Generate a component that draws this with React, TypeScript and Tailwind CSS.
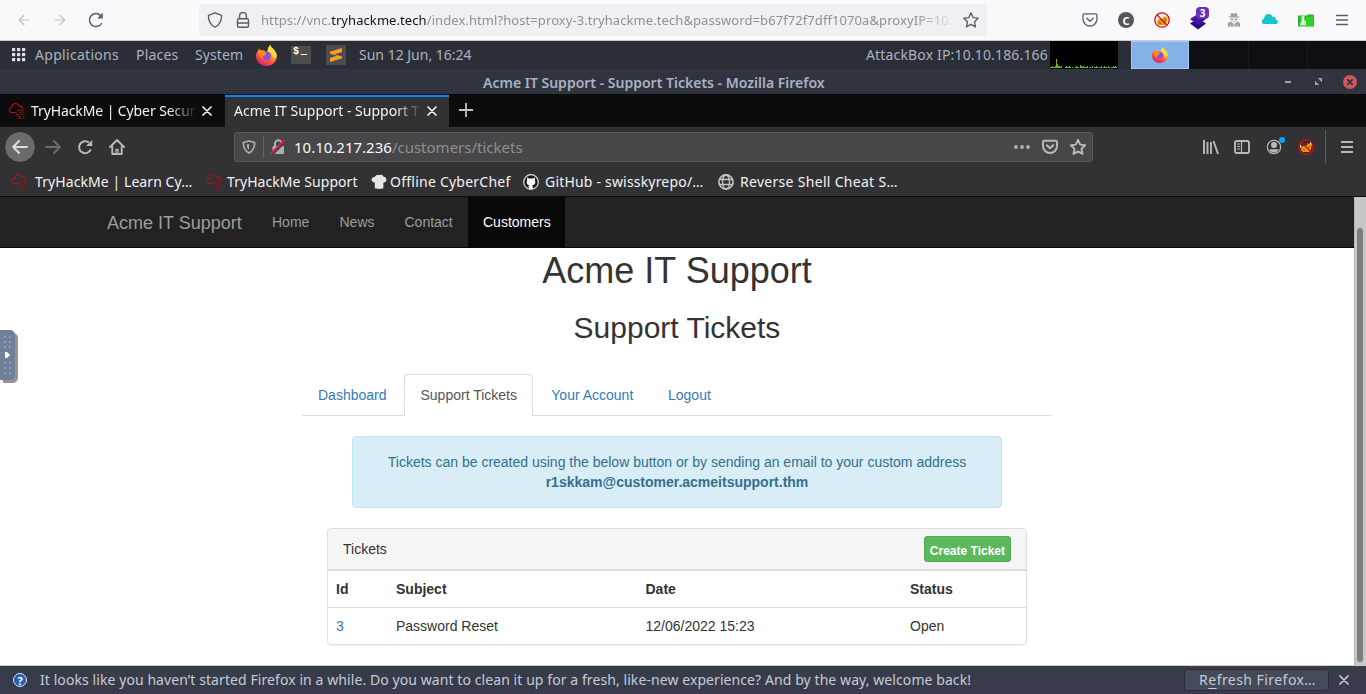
import React from "react";
import { ArrowLeft, ArrowRight } from "lucide-react";

function Firefox({ className }: { className: string }) {
  return (
    <svg viewBox="0 0 20 20" className={className}>
      <defs>
        <linearGradient id="fx" x1="0.85" y1="0.05" x2="0.3" y2="1">
          <stop offset="0" stopColor="#fff44f" />
          <stop offset="0.35" stopColor="#ffa42e" />
          <stop offset="0.65" stopColor="#ff5a36" />
          <stop offset="1" stopColor="#e31587" />
        </linearGradient>
      </defs>
      <path d="M2.2 5.2 2.6 3.4 4.6 5.1 6.8 4.9C8 4.9 9 6 9.6 6.6L11 6.2C11 3 12.5 1 13.6 0c.4 2.400 3 3.400 4.300 5.600C19.300 7 20 9 19.900 11 19.600 16 15.400 20 10.200 20 4.600 20 0 16 0 10.500 0 8.500.6 6.800 2.200 5.200Z" fill="url(#fx)" />
      <path d="M11 6.200C11 3 12.500 1 13.600 0c.4 2.400 3 3.400 4.300 5.600C19.300 7.500 19.600 9 19.300 11L16.500 13C16 9 14.500 7.500 11 6.200Z" fill="#ffdc3e" />
      <path d="M6 7.800C8 6 12 5.500 13.600 8c1.500 2.600.2 6.200-3.300 6.400-2.800.1-4.600-1.800-4.300-3.600l3.200-.9Z" fill="#8055d8" />
      <path d="M2.500 6.200C5 5 6.500 5.200 8.900 7.200l1 1.400-2.700 1.500c-1.400.8-.8 2.400.8 3-2.800.4-5.500-2-5.500-6.900Z" fill="#ff8a1f" />
    </svg>
  );
}

function RedCloud() {
  return (
    <svg viewBox="0 0 18 18" className="h-[18px] w-[18px] shrink-0" fill="none">
      <path d="M4 10.500C1.500 10.500 1 8.500 1.200 7.600 1.500 6 2.700 5.500 3.800 5.400 4 3 5.500 1.500 7.500 1.500c1.800 0 2.900 1 3.400 2.400 2-.2 3.500.8 3.800 3M4 10.500h4.500" stroke="#b01217" strokeWidth="1.100" />
      <path d="M9.500 8.500h2M12.500 8.500h3M8 12.500h3M12.500 12.500h2M10.500 16h2.500M15 14.500h1.500" stroke="#8f1216" strokeWidth="1.300" />
      <path d="M11.500 10.500h1.500M14.500 10.500h2M9.500 14.500h3M14 16.500h2" stroke="#5e181b" strokeWidth="1.200" />
    </svg>
  );
}

function Close({ className }: { className: string }) {
  return (
    <svg viewBox="0 0 10 10" className={className} stroke="currentColor" strokeWidth="1.700" strokeLinecap="round">
      <path d="M1 1 9 9M9 1 1 9" />
    </svg>
  );
}

function Reload({ className }: { className: string }) {
  return (
    <svg viewBox="0 0 16 16" className={className} fill="none" stroke="currentColor" strokeWidth="1.500">
      <path d="M13.800 11A6.500 6.500 0 1 1 12.500 3.400" />
      <path d="M14.800.8v5.700H9.200Z" fill="currentColor" stroke="none" />
    </svg>
  );
}

function Pocket({ className, weight }: { className: string; weight: number }) {
  return (
    <svg viewBox="0 0 16 16" className={className} fill="none" stroke="currentColor" strokeWidth={weight} strokeLinecap="round" strokeLinejoin="round">
      <path d="M2.300 1.800h11.400a1.300 1.300 0 0 1 1.300 1.300V7A7 7 0 0 1 1 7V3.100a1.300 1.300 0 0 1 1.300-1.300Z" />
      <path d="m4.800 6.300 3.200 3 3.200-3" />
    </svg>
  );
}

function Star({ className, weight }: { className: string; weight: number }) {
  return (
    <svg viewBox="0 0 16 16" className={className} fill="none" stroke="currentColor" strokeWidth={weight} strokeLinejoin="round">
      <path d="m8 .9 2.200 4.700 5 .6-3.700 3.500 1 5.200L8 12.400l-4.500 2.500 1-5.200L.8 6.200l5-.6Z" />
    </svg>
  );
}

function NoFox({ ground }: { ground: string }) {
  return (
    <svg viewBox="0 0 16 16" className="h-4 w-4 shrink-0">
      <circle cx="8" cy="8" r="7" fill={ground} />
      <path d="M3.500 8 5.500 7 9 6.500 9.500 4 11 5l1.500-1L13.500 6.500 13 10l-2 3H4.500L3 11Z" fill="#f0900f" />
      <path d="m12.500 2.500 1.500 2-.5 2-1.500-2ZM1.800 5l2 2.500-1.300 2Z" fill="#f3e3cf" />
      <path d="m5 10.500 2 1M10 8.500l2-.5" stroke="#70421a" strokeWidth=".8" />
      <circle cx="8" cy="8" r="7.200" fill="none" stroke="#cd1010" strokeWidth="1.300" />
      <path d="m3 3 10 10" stroke="#cd1010" strokeWidth="1.300" />
    </svg>
  );
}

function OuterToolbar() {
  return (
    <div className="flex h-[41px] shrink-0 items-center border-b border-[#cccccf] bg-[#f9f9fb] text-[#5b5b66]">
      <div className="flex w-[199px] items-center pl-4 text-[#bdbdc1]">
        <ArrowLeft className="h-4 w-4" strokeWidth={1.8} />
        <ArrowRight className="ml-5 h-4 w-4" strokeWidth={1.8} />
        <Reload className="ml-5 h-4 w-4 text-[#5b5b66]" />
      </div>
      <div className="flex h-8 w-[788px] items-center rounded bg-[#f0f0f4] pl-2">
        <svg viewBox="0 0 16 16" className="h-4 w-4" fill="none" stroke="currentColor" strokeWidth="1.300" strokeLinejoin="round">
          <path d="M8 .8 14.600 3.300C14.700 8.500 13 12.500 8 15.300 3 12.500 1.300 8.500 1.400 3.300Z" />
        </svg>
        <svg viewBox="0 0 16 16" className="ml-3 h-4 w-4" fill="none" stroke="currentColor" strokeWidth="1.400">
          <rect x="2.500" y="6.800" width="11" height="8.400" rx="1.500" />
          <path d="M4.600 6.800V4a3.400 3.400 0 0 1 6.800 0v2.800M2.500 11h11" />
        </svg>
        <div className="ml-[10px] w-[696px] overflow-hidden whitespace-nowrap pt-[2px] font-['Noto_Sans'] text-[13px] tracking-[0.08px] text-[#8f8f98] [mask-image:linear-gradient(to_right,black_94%,transparent)]">
          https://vnc.<span className="text-[#15141a]">tryhackme.tech</span>/index.html?host=proxy-3.tryhackme.tech&amp;password=b67f72f7dff1070a&amp;proxyIP=10.
        </div>
        <Star className="ml-[6px] h-4 w-4" weight={1.3} />
      </div>
      <div className="ml-[85px] grid grid-cols-[repeat(8,36px)] items-center justify-items-center">
        <Pocket className="h-4 w-4" weight={1.3} />
        <span className="flex h-4 w-4 items-center justify-center rounded-full bg-[#55555e] font-['Noto_Sans'] text-[11px] font-bold leading-none text-white">C</span>
        <NoFox ground="#fdf6ec" />
        <div className="relative h-5 w-[18px]">
          <svg viewBox="0 0 18 18" className="mt-[2px] h-[18px] w-[18px]">
            <path d="m1 11.500 8-5 8 5-8 6Z" fill="#2a0a7c" />
            <path d="m1 7 8-5 8 5-8 6Z" fill="#4413a8" />
          </svg>
          <span className="absolute -top-[3px] left-[7px] flex h-[12px] w-[13px] items-center justify-center rounded-sm bg-[#6534b4] font-['Noto_Sans'] text-[10px] font-bold leading-none text-white">3</span>
        </div>
        <svg viewBox="0 0 16 16" className="h-[14px] w-[14px]" fill="#a1a1a3">
          <path d="M4.500 0h2l1 .8h1L9.500 0h2l.3 4H14v1.200H2V4h2.200ZM4 6.200h3.300v1.600L6 8.500H4.500ZM8.700 6.200H12L11.500 8.500H10l-1.300-.7ZM6.500 9h3L8 10.500ZM1 11.500 4.500 9.700 7.500 12.300V15.800H4.500V14H3.500v1.800H1ZM15 11.500 11.500 9.700 8.500 12.300V15.800h3V14h1v1.800H15Z" />
        </svg>
        <svg viewBox="0 0 16 12" className="-mt-[2px] h-3 w-4" fill="#18c3cc">
          <path d="M2.500 11A2.500 2.500 0 0 1 2 6C2 3 4 1 6.500 1c2 0 3.300 1 4 2.800C13 3.500 14 5 14 6.800c1.500.2 2 1.400 2 2.200 0 1.200-.8 2-2 2Z" />
        </svg>
        <svg viewBox="0 0 16 13" className="mt-px h-[13px] w-4">
          <path d="M0 1.500h9L10 .5h5.500L16 2v10.500H0Z" fill="#25b928" />
          <path d="M8 2.500h7.500V12H8Z" fill="#2fcf2c" />
          <path d="M3.500 2h3v4L8 7v4.500H2V9.500L3.500 7Z" fill="#b9edb9" />
          <path d="M4.500 3.500h1V7l1 2.500h-3l1-2.500Z" fill="#f5fff5" />
        </svg>
        <svg viewBox="0 0 12 12" className="h-3 w-3" stroke="currentColor" strokeWidth="1.300"><path d="M0 1.500h12M0 6h12M0 10.500h12" /></svg>
      </div>
    </div>
  );
}

const netBars = [1, 1, 2, 1, 1, 2, 9, 4, 2, 2, 1, 2, 0, 0, 0, 1, 2, 1, 1, 2, 1, 0, 1, 0, 0, 1, 2, 1, 1, 0, 3, 2, 1, 2, 1, 1, 1, 2, 0, 1, 1, 0, 2, 0, 1, 1, 2, 1, 0, 1, 1, 2, 0, 1, 2, 1, 1, 0, 2, 1, 0, 1, 1, 2, 1, 2, 1];

function DesktopPanel() {
  return (
    <div className="flex h-7 shrink-0 items-center whitespace-nowrap bg-[#2b2e37] font-['Noto_Sans'] text-[14px] text-[#a9b2c0]">
      <svg viewBox="0 0 14 14" className="ml-3 h-[14px] w-[14px]" fill="#dcdfe4">
        {[0, 5, 10].map((y) => [0, 5, 10].map((x) => <rect key={`${x}-${y}`} x={x} y={y} width="3.200" height="3.200" />))}
      </svg>
      <span className="-mt-[2px] ml-[9px] w-[101px] tracking-[0.3px]">Applications</span>
      <span className="-mt-[2px] w-[59px] tracking-[0.2px]">Places</span>
      <span className="-mt-[2px] w-[61px] tracking-[0.1px]">System</span>
      <Firefox className="h-[21px] w-[21px]" />
      <span className="ml-[14px] flex h-[18px] w-5 items-start bg-[#4d4d4d] pl-[2px] font-['Liberation_Mono'] text-[10px] font-bold leading-[11px] text-white">
        $<span className="ml-[2px] mt-2 h-px w-[6px] bg-white" />
      </span>
      <span className="ml-[15px] flex h-5 w-5 items-center justify-center bg-[#4d4d4d]">
        <svg viewBox="0 0 12 14" className="h-[14px] w-3" fill="#ff9d24">
          <path d="M0 3.800 12 0v4L4.500 6.300 12 8.500V10.300L0 14V10l7-2.200L0 5.800Z" />
        </svg>
      </span>
      <span className="-mt-[2px] ml-[13px] w-[507px]">Sun 12 Jun, 16:24</span>
      <span className="-mt-[2px] w-[184px] tracking-[0.16px]">AttackBox IP:10.10.186.166</span>
      <svg viewBox="0 0 68 28" className="h-7 w-[68px] bg-black" fill="#66b814">
        {netBars.map((h, i) => <rect key={i} x={i} y={27 - h} width="1" height={h} />)}
      </svg>
      <span className="ml-[13px] flex h-7 w-[58px] items-center justify-center border border-[#a5c9f4] bg-[#85b1e9]">
        <Firefox className="h-4 w-4" />
      </span>
      <span className="h-7 w-[60px] border-r border-[#191b20] bg-[#0e0f12]" />
      <span className="h-7 w-[59px] border-r border-[#191b20] bg-[#0e0f12]" />
      <span className="h-7 flex-1 bg-[#0e0f12]" />
    </div>
  );
}

function TitleBar() {
  return (
    <div className="flex h-[25px] shrink-0 items-center bg-[#2f343f] font-['Noto_Sans'] text-[#a9b2c0]">
      <span className="ml-[483px] w-[802px] whitespace-nowrap pt-px text-[14px] font-semibold">Acme IT Support - Support Tickets - Mozilla Firefox</span>
      <span className="h-[2px] w-[6px] bg-[#9aa2ae]" />
      <svg viewBox="0 0 8 8" className="ml-6 h-[7px] w-[7px]" fill="#9aa2ae"><path d="M3 0h5v5ZM0 3v5h5Z" /></svg>
      <span className="ml-[21px] flex h-[14px] w-[14px] items-center justify-center rounded-full bg-[#cc575d] text-[#2f343f]">
        <svg viewBox="0 0 6 6" className="h-[6px] w-[6px]" stroke="currentColor" strokeWidth="1.800"><path d="m0 0 6 6M6 0 0 6" /></svg>
      </span>
    </div>
  );
}

function TabStrip() {
  return (
    <div className="flex h-[33px] shrink-0 items-stretch bg-[#0c0c0d] font-['Noto_Sans'] text-[14px] text-[#f3f3f4]">
      <div className="flex w-[225px] items-center pl-2">
        <RedCloud />
        <span className="ml-[5px] w-[167px] overflow-hidden whitespace-nowrap tracking-[-0.1px] [mask-image:linear-gradient(to_right,black_82%,transparent)]">TryHackMe | Cyber Secur</span>
        <Close className="ml-1 h-[10px] w-[10px]" />
      </div>
      <div className="mt-px flex w-[224px] items-center border-t-2 border-[#0a84ff] bg-[#323234] pb-[3px] pl-[9px]">
        <span className="w-[188px] overflow-hidden whitespace-nowrap [mask-image:linear-gradient(to_right,black_86%,transparent)]">Acme IT Support - Support T</span>
        <Close className="ml-[5px] h-[10px] w-[10px]" />
      </div>
      <svg viewBox="0 0 14 14" className="ml-[10px] mt-[9px] h-[14px] w-[14px]" stroke="#c3c3c4" strokeWidth="1.800"><path d="M7 0v14M0 7h14" /></svg>
    </div>
  );
}

function NavToolbar() {
  return (
    <div className="flex h-10 shrink-0 items-center bg-[#323234] font-['Noto_Sans'] text-[#b9b9ba]">
      <span className="ml-1 flex h-8 w-8 items-center justify-center rounded-full border border-[#29292b] bg-[#6b6b6c] text-[#dcdcdc]">
        <svg viewBox="0 0 16 14" className="h-[14px] w-4" fill="none" stroke="currentColor" strokeWidth="2" strokeLinecap="round" strokeLinejoin="round"><path d="M15 7H1.500M7 1 1.200 7 7 13" /></svg>
      </span>
      <svg viewBox="0 0 16 14" className="ml-[9px] h-[14px] w-4 text-[#6d6d6f]" fill="none" stroke="currentColor" strokeWidth="2" strokeLinecap="round" strokeLinejoin="round"><path d="M1 7h13.500M9 1l5.800 6L9 13" /></svg>
      <svg viewBox="0 0 16 16" className="ml-4 h-4 w-4" fill="none" stroke="currentColor" strokeWidth="2">
        <path d="M13.700 10.500A6 6 0 1 1 12 3.600" /><path d="M15.200 1v6H9Z" fill="currentColor" stroke="none" />
      </svg>
      <svg viewBox="0 0 16 16" className="ml-4 h-4 w-4" fill="none" stroke="currentColor" strokeWidth="1.900" strokeLinejoin="round" strokeLinecap="round">
        <path d="M1 8 8 1l7 7M3.300 7.500V15h9.400V7.500" /><path d="M7 14v-3.500h2V14" strokeWidth="1.300" />
      </svg>
      <div className="ml-[109px] flex h-[30px] w-[859px] items-center rounded-[3px] border border-[#5b5b5d] bg-[#474749]">
        <svg viewBox="0 0 14 14" className="ml-[7px] h-[14px] w-[14px]" fill="none" stroke="#b1b1b3" strokeWidth="1.600" strokeLinejoin="round">
          <path d="M7 1 12.700 2.500c0 4-.7 8-5.700 10.500C2 10.500 1.300 6.500 1.300 2.500Z" /><path d="M7 4v6c-2-1.300-2.200-3.500-2.200-5.500Z" fill="#b1b1b3" stroke="none" />
        </svg>
        <span className="ml-[7px] h-[22px] w-px bg-[#646466]" />
        <svg viewBox="0 0 16 16" className="ml-[6px] h-4 w-4">
          <rect x="2.500" y="7" width="11.500" height="8" rx="1" fill="#b1b1b3" />
          <path d="M5 7.500V4.500a3.300 3.300 0 0 1 6.600 0v3" fill="none" stroke="#b1b1b3" strokeWidth="2" />
          <path d="M2 15.500 15.500 2" stroke="#474749" strokeWidth="3" /><path d="M1 14.500 14.500 1" stroke="#f0134d" strokeWidth="1.800" />
        </svg>
        <span className="ml-2 w-[720px] whitespace-nowrap text-[15px] text-[#8f8f91]"><span className="text-[#f9f9fa]">10.10.217.236</span>/customers/tickets</span>
        <svg viewBox="0 0 16 4" className="h-1 w-4" fill="#b1b1b3"><circle cx="2" cy="2" r="1.900" /><circle cx="8" cy="2" r="1.900" /><circle cx="14" cy="2" r="1.900" /></svg>
        <Pocket className="ml-3 h-4 w-4" weight={2} />
        <Star className="ml-3 h-4 w-4" weight={1.9} />
      </div>
      <svg viewBox="0 0 16 14" className="ml-[110px] h-[14px] w-4" stroke="currentColor" strokeWidth="1.900" fill="none"><path d="M1 0v14M4.500 2v12M8 2v12M10.500 1l4.500 13" /></svg>
      <svg viewBox="0 0 16 14" className="ml-[15px] h-[14px] w-4" fill="none" stroke="currentColor"><rect x="1" y="1" width="14" height="12" rx="1.800" strokeWidth="1.900" /><path d="M7.500 1v12M3 4h3M3 6.500h3M3 9h3" strokeWidth="1.200" /></svg>
      <div className="relative ml-4 h-4 w-4">
        <svg viewBox="0 0 16 16" className="h-4 w-4" fill="currentColor"><circle cx="8" cy="8" r="6.700" fill="none" stroke="currentColor" strokeWidth="1.200" /><circle cx="8" cy="6" r="3" /><path d="M3.500 10.200h9C12 12.800 10 13.500 8 13.500s-4-.7-4.500-3.300Z" /></svg>
        <span className="absolute -top-[2px] left-[13px] h-[6px] w-[6px] rounded-full bg-[#00a9f8]" />
      </div>
      <span className="ml-4"><NoFox ground="#3a2c2c" /></span>
      <span className="ml-[11px] h-[34px] w-px bg-[#5c5c5e]" />
      <svg viewBox="0 0 12 12" className="ml-[15px] h-3 w-3" stroke="currentColor" strokeWidth="2"><path d="M0 1h12M0 6h12M0 11h12" /></svg>
    </div>
  );
}

function BookmarksBar() {
  return (
    <div className="flex h-[30px] shrink-0 items-center whitespace-nowrap border-b border-[#0c0c0d] bg-[#323234] font-['Noto_Sans'] text-[14px] text-[#f3f3f4]">
      <span className="ml-[11px] flex w-[195px] items-center gap-[6px] tracking-[0.08px]"><RedCloud />TryHackMe | Learn Cy…</span>
      <span className="flex w-[165px] items-center gap-[3px] tracking-[0.06px]"><RedCloud />TryHackMe Support</span>
      <span className="flex w-[152px] items-center gap-[3px] tracking-[0.24px]">
        <svg viewBox="0 0 16 16" className="h-4 w-4" fill="#e6e6e6"><path d="M3.800 8.500C1.500 8.500.5 7 .7 5.300.9 3.500 2.500 2.800 3.800 3 4.500 1 6.500.6 8 1.200 9.500.4 12 .8 12.500 2.800c1.600 0 2.900 1 2.900 2.900 0 1.500-1 2.800-3 2.800v5.500c-2 1.200-6.600 1.200-8.600 0Z" /></svg>
        Offline CyberChef
      </span>
      <span className="flex w-[195px] items-center gap-[6px] tracking-[0.19px]">
        <svg viewBox="0 0 16 16" className="h-4 w-4"><circle cx="8" cy="8" r="7.300" fill="#17181b" stroke="#e4e4e4" strokeWidth="1.200" /><path d="M4 3.500 6.500 4.500h3L12 3.500v3c1 3-.5 4.500-2.500 4.700l.5 3.800H6v-2L4.500 12 6 11.800l.3-.7C4.300 10.800 3 9.500 4 6.500Z" fill="#f3f3f3" /></svg>
        GitHub - swisskyrepo/…
      </span>
      <span className="flex items-center gap-[6px] tracking-[0.3px]">
        <svg viewBox="0 0 16 16" className="h-4 w-4" fill="none" stroke="#c7c7c8" strokeWidth="1.300"><circle cx="8" cy="8" r="7.100" strokeWidth="1.600" /><ellipse cx="8" cy="8" rx="3.500" ry="7" /><path d="M1 5.500h14M1 10.500h14" /></svg>
        Reverse Shell Cheat S…
      </span>
    </div>
  );
}

function SitePage() {
  return (
    <div className="relative flex min-h-0 flex-1 bg-white font-['Liberation_Sans'] text-[14px] leading-5 text-[#333]">
      <div className="h-[468px] w-[1354px] overflow-hidden whitespace-nowrap">
        <nav className="flex h-[51px] items-stretch border-b border-[#080808] bg-[#222] pl-[92px] text-[#9d9d9d]">
          <span className="w-[165px] px-[15px] py-4 text-[18px]">Acme IT Support</span>
          <span className="w-[67.500px] p-[15px]">Home</span>
          <span className="w-[65px] p-[15px]">News</span>
          <span className="w-[78.500px] p-[15px]">Contact</span>
          <span className="w-[97px] bg-[#080808] p-[15px] text-white">Customers</span>
        </nav>
        <h1 className="mt-[3px] text-center text-[36px] leading-10">Acme IT Support</h1>
        <h2 className="mt-5 text-center text-[30px] leading-[33px]">Support Tickets</h2>
        <div className="mx-auto mt-[30px] flex h-[42px] w-[750px] border-b border-[#ddd] text-[#337ab7]">
          <span className="w-[102px] px-4 py-[11px]">Dashboard</span>
          <span className="h-[42px] w-[129px] rounded-t border border-b-0 border-[#ddd] bg-white px-[15.500px] py-[10px] text-[#555]">Support Tickets</span>
          <span className="ml-[2px] w-[117px] px-[16.300px] py-[11px]">Your Account</span>
          <span className="px-4 py-[11px]">Logout</span>
        </div>
        <div className="mx-auto mt-5 h-[72px] w-[650px] rounded border border-[#bce8f1] bg-[#d9edf7] py-[15px] text-center text-[#31708f]">
          <p>Tickets can be created using the below button or by sending an email to your custom address</p>
          <p className="font-bold">r1skkam@customer.acmeitsupport.thm</p>
        </div>
        <div className="mx-auto mt-5 w-[700px] rounded border border-[#ddd] shadow-[0_1px_1px_rgba(0,0,0,0.05)]">
          <div className="flex h-[41px] items-center justify-between rounded-t-[3px] border-b border-[#ddd] bg-[#f5f5f5] px-[15px]">
            <span>Tickets</span>
            <button className="h-[26px] rounded-[3px] border border-[#4cae4c] bg-[#5cb85c] px-[5px] pt-[3px] text-[12px] font-bold leading-[18px] text-white">Create Ticket</button>
          </div>
          <div className="grid grid-cols-[60px_249.500px_264.500px_124px] border-t border-[#ddd] font-bold">
            <span className="p-2">Id</span><span className="p-2">Subject</span><span className="p-2">Date</span><span className="p-2">Status</span>
          </div>
          <div className="grid grid-cols-[60px_249.500px_264.500px_124px] border-t border-[#ddd]">
            <span className="p-2 text-[#337ab7]">3</span><span className="p-2">Password Reset</span><span className="p-2">12/06/2022 15:23</span><span className="p-2">Open</span>
          </div>
        </div>
      </div>
      <div className="flex w-3 flex-col border-l border-[#b5b8b8] bg-[#c6c8c7] pl-[2px] pt-[31px]">
        <span className="h-[434px] w-[6px] rounded-full bg-[#7b7e7e]" />
      </div>
      <div className="absolute left-0 top-[133px] flex h-[50px] w-[15px] items-center justify-center rounded-r-[5px] bg-[#71809a] shadow-[3px_3px_0_#97958f]">
        <svg viewBox="0 0 10 42" className="h-[42px] w-[10px]">
          {[2, 7, 12, 28, 33, 38].map((y) => [1, 6].map((x) => <rect key={`${x}-${y}`} x={x} y={y} width="2" height="2" fill="#929db0" />))}
          <path d="M2 18v6h2l3-3-3-3Z" fill="#fff" />
        </svg>
      </div>
    </div>
  );
}

function NotificationBar() {
  return (
    <div className="flex h-[29px] shrink-0 items-center whitespace-nowrap border-t border-[#cfcfd1] bg-[#383c4a] font-['Noto_Sans'] text-[14px] text-[#c5cbd8]">
      <span className="ml-[13px] flex h-[14px] w-[14px] items-center justify-center rounded-full border border-[#dbe7fa] bg-[#2a5dbb] text-[11px] font-bold leading-none text-white">?</span>
      <span className="ml-[13px] w-[1144px] pb-[2px] tracking-[0.08px]">It looks like you haven’t started Firefox in a while. Do you want to clean it up for a fresh, like-new experience? And by the way, welcome back!</span>
      <button className="flex h-[22px] w-[145px] items-center justify-center rounded-[3px] border border-[#2b2e39] bg-[#444a58] pb-px pl-[2px] tracking-[0.45px]">R<span className="underline underline-offset-[3px]">e</span>fresh Firefox…</button>
      <Close className="ml-[10px] h-[10px] w-[10px]" />
    </div>
  );
}

export default function App() {
  return (
    <div className="flex h-[694px] w-[1366px] flex-col overflow-hidden">
      <OuterToolbar />
      <DesktopPanel />
      <TitleBar />
      <TabStrip />
      <NavToolbar />
      <BookmarksBar />
      <SitePage />
      <NotificationBar />
    </div>
  );
}
